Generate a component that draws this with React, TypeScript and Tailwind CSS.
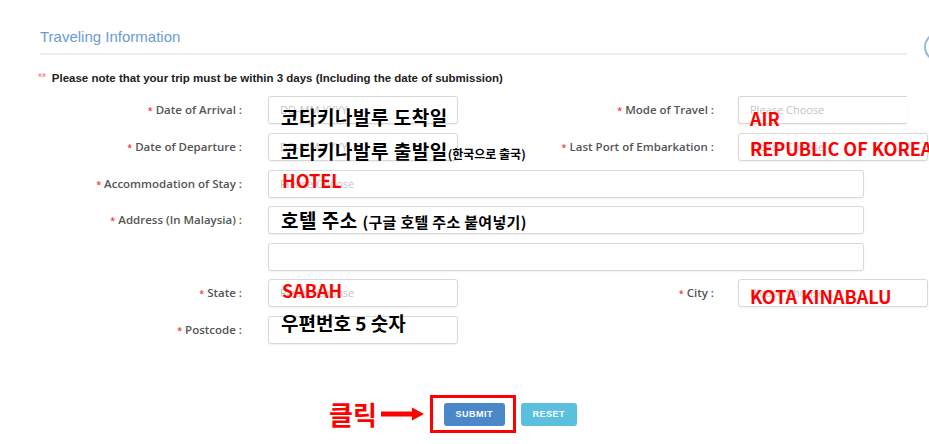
import type { ReactNode } from 'react'

const ko = "font-['Noto_Sans_CJK_KR','Noto_Sans',sans-serif]"

function Label({ text, className }: { text: string; className: string }) {
  return (
    <div className={`shrink-0 text-right text-[11.5px] font-semibold text-[#555] ${className}`}>
      <span className="mr-[3px] text-[9px] text-[#e33]">*</span>
      {text} :
    </div>
  )
}

function Box({
  className,
  placeholder,
  children,
}: {
  className: string
  placeholder?: string
  children?: ReactNode
}) {
  return (
    <div
      className={`relative flex h-[28px] shrink-0 items-center rounded-[3px] border border-[#d8d8d8] bg-white pl-[11px] shadow-[0_1px_2px_rgba(0,0,0,0.06)] ${className}`}
    >
      {placeholder && <span className="text-[11px] text-[#c4c4c4]">{placeholder}</span>}
      {children}
    </div>
  )
}

function Note({ children, className }: { children: ReactNode; className: string }) {
  return (
    <span className={`absolute left-[12px] whitespace-nowrap text-[19px] leading-[19px] font-bold tracking-[0.5px] text-black ${ko} ${className}`}>
      {children}
    </span>
  )
}

function Red({ children, className }: { children: ReactNode; className: string }) {
  return (
    <span className={`absolute left-[11px] whitespace-nowrap text-[18px] leading-[18px] font-bold text-[#ff0000] ${ko} ${className}`}>
      {children}
    </span>
  )
}

export default function App() {
  return (
    <div className="relative h-[444px] w-[929px] overflow-hidden bg-white font-['Open_Sans',sans-serif]">
      {/* cut-off widget at the right edge */}
      <div className="absolute left-[924px] top-[32px] h-[30px] w-[30px] rounded-full border-2 border-[#9cb8d6]" />

      <div className="pl-[40px] pt-[28px]">
        <h2 className="text-[15px] leading-[17px] text-[#6b9bd6] font-['Liberation_Sans',Arial,sans-serif]">
          Traveling Information
        </h2>
        <div className="mt-[8px] h-[2px] w-[867px] bg-[#eeeeee]" />
      </div>

      <p className="mt-[16px] flex items-center pl-[38px] text-[11.5px] leading-[14px] font-bold text-[#222] font-['Liberation_Sans',Arial,sans-serif]">
        <span className="mr-[6px] text-[10px] text-[#f59a9a]">**</span>
        Please note that your trip must be within 3 days (Including the date of submission)
      </p>

      <div className="mt-[11px] flex flex-col">
        <div className="flex h-[28px] items-center">
          <Label text="Date of Arrival" className="w-[242px]" />
          <Box className="ml-[26px] w-[190px]" placeholder="DD-MM-YYYY">
            <Note className="top-[10px]">코타키나발루 도착일</Note>
          </Box>
          <Label text="Mode of Travel" className="w-[256px]" />
          <Box className="ml-[24px] w-[169px] rounded-r-none border-r-0" placeholder="Please Choose">
            <Red className="top-[12px]">AIR</Red>
          </Box>
        </div>

        <div className="mt-[9px] flex h-[28px] items-center">
          <Label text="Date of Departure" className="w-[242px]" />
          <Box className="ml-[26px] w-[190px]" placeholder="DD-MM-YYYY">
            <Note className="top-[7px]">
              코타키나발루 출발일<span className="text-[12px] tracking-normal">(한국으로 출국)</span>
            </Note>
          </Box>
          <Label text="Last Port of Embarkation" className="w-[256px]" />
          <Box className="ml-[24px] w-[190px]" placeholder="Please Choose">
            <Red className="top-[5px]">REPUBLIC OF KOREA</Red>
          </Box>
        </div>

        <div className="mt-[9px] flex h-[28px] items-center">
          <Label text="Accommodation of Stay" className="w-[242px]" />
          <Box className="ml-[26px] w-[596px]" placeholder="Please Choose">
            <Red className="left-[13px] top-0">HOTEL</Red>
          </Box>
        </div>

        <div className="mt-[8px] flex h-[28px] items-center">
          <Label text="Address (In Malaysia)" className="w-[242px]" />
          <Box className="ml-[26px] w-[596px]">
            <Note className="top-[3px]">
              호텔 주소 <span className="text-[15px] tracking-[0.3px]">(구글 호텔 주소 붙여넣기)</span>
            </Note>
          </Box>
        </div>

        <div className="mt-[9px] flex h-[28px] items-center">
          <div className="w-[242px] shrink-0" />
          <Box className="ml-[26px] w-[596px]" />
        </div>

        <div className="mt-[8px] flex h-[28px] items-center">
          <Label text="State" className="w-[242px]" />
          <Box className="ml-[26px] w-[190px]" placeholder="Please Choose">
            <Red className="left-[13px] top-[1px]">SABAH</Red>
          </Box>
          <Label text="City" className="w-[256px]" />
          <Box className="ml-[24px] w-[190px]" placeholder="Please Choose">
            <Red className="top-[7px]">KOTA KINABALU</Red>
          </Box>
        </div>

        <div className="mt-[9px] flex h-[28px] items-center">
          <Label text="Postcode" className="w-[242px]" />
          <Box className="ml-[26px] w-[190px]">
            <Note className="top-[-4px] tracking-normal">우편번호 5 숫자</Note>
          </Box>
        </div>
      </div>

      <div className="mt-[51px] flex h-[38px] items-center pl-[329px]">
        <span className={`text-[26px] leading-[26px] font-bold text-[#ff0000] ${ko}`}>클릭</span>
        <svg className="ml-[4px]" width="44" height="14" viewBox="0 0 44 14">
          <path d="M0 4.5 L31 4.5 L31 0.5 L43 7 L31 13.5 L31 9.5 L0 9.5 Z" fill="#ff0000" />
        </svg>
        <div className="ml-[5px] flex h-[38px] w-[86px] items-center border-[3px] border-[#ff0000] pl-[11px] pt-[1px]">
          <button className="flex h-[23px] w-[61px] items-center justify-center rounded-[3px] bg-[#4a88c9] text-[9px] font-bold tracking-[0.5px] text-white font-['Liberation_Sans',Arial,sans-serif]">
            SUBMIT
          </button>
        </div>
        <button className="ml-[5px] mt-[1px] flex h-[23px] w-[56px] items-center justify-center rounded-[3px] bg-[#5bc0de] text-[9px] font-bold tracking-[0.5px] text-white font-['Liberation_Sans',Arial,sans-serif]">
          RESET
        </button>
      </div>
    </div>
  )
}
